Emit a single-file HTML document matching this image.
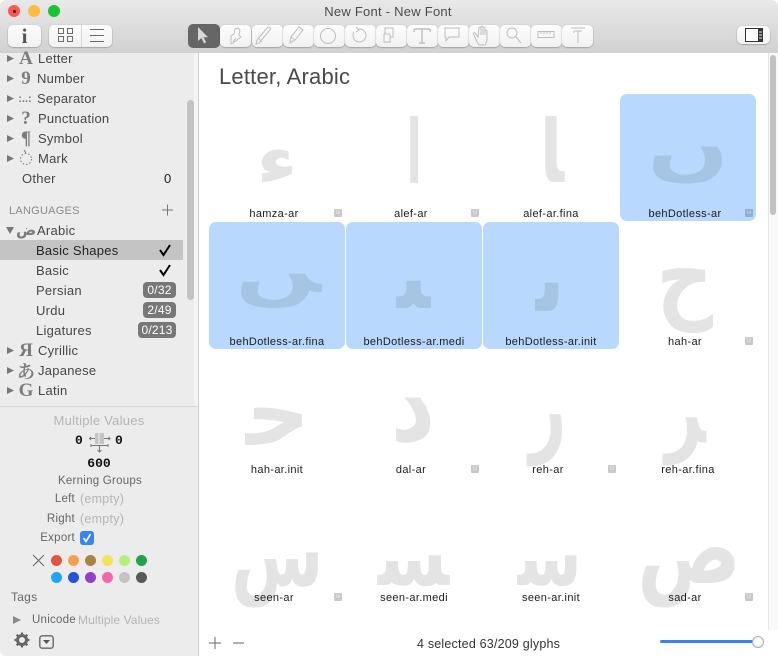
<!DOCTYPE html>
<html><head><meta charset="utf-8"><style>
html,body{margin:0;padding:0;width:778px;height:656px;overflow:hidden;background:#fff;font-family:"Liberation Sans",sans-serif}
#w{position:absolute;left:0;top:0;width:778px;height:656px;background:#fff;border-radius:6px;overflow:hidden}
.a{position:absolute}
.t{position:absolute;white-space:nowrap;line-height:20px;height:20px;font-size:13px;letter-spacing:.25px;color:#464646;margin-top:1px}
.i{position:absolute;white-space:nowrap;font-family:"Liberation Serif",serif;font-weight:bold;color:#7c7c7c;line-height:20px;height:20px;font-size:19px;text-align:center;width:20px;margin-top:1px}
.b{position:absolute;background:#777;color:#fff;border-radius:4px;height:16px;line-height:16px;font-size:12px;text-align:center;letter-spacing:.2px}
.btn{position:absolute;background:linear-gradient(#fdfdfd,#f1f1f1);border-radius:5px;box-shadow:0 .5px 1.5px rgba(0,0,0,.38)}
.cell{position:absolute;width:136px;height:127px;background:#b8d9fd;border-radius:7px}
.l{position:absolute;width:136px;text-align:center;font-size:11px;letter-spacing:.35px;line-height:14px;color:#1c1c1c;white-space:nowrap;margin-top:1px}
.u{position:absolute;width:8px;height:8px;background:#c9c9c9;border-radius:1px;color:#eee;font-size:7px;line-height:8px;text-align:center}
.m{font-family:"Liberation Mono",monospace;color:#111;font-size:13px}
.c{position:absolute;width:11px;height:11px;border-radius:50%}
svg{position:absolute;overflow:visible}
#ar text{font-family:"DejaVu Sans",sans-serif;font-weight:bold;font-size:100px;fill:#e4e4e4}
#ar text.s{fill:#a6c5e5}
</style></head><body><div id="w">

<div class="a" style="left:0;top:0;width:778px;height:53px;background:linear-gradient(#e9e9e9,#d1d1d1)"></div>
<div class="a" style="left:8px;top:5px;width:12px;height:12px;border-radius:50%;background:#fc5753"></div>
<div class="a" style="left:12.5px;top:9.5px;width:3px;height:3px;border-radius:50%;background:#5e0b08"></div>
<div class="a" style="left:28px;top:5px;width:12px;height:12px;border-radius:50%;background:#fdbc40"></div>
<div class="a" style="left:48px;top:5px;width:12px;height:12px;border-radius:50%;background:#19c332"></div>
<div class="t" style="left:288px;width:200px;text-align:center;top:1px;color:#4b4b4b">New Font - New Font</div>

<div class="btn" style="left:8px;top:25px;width:33px;height:22px"></div>
<div class="a" style="left:8px;top:23px;width:33px;text-align:center;font:bold 21px/26px 'Liberation Serif',serif;color:#555">i</div>
<div class="btn" style="left:49px;top:25px;width:63px;height:22px"></div>
<div class="a" style="left:81px;top:25px;width:1px;height:22px;background:#d8d8d8"></div>
<svg style="left:0;top:0" width="778" height="53" fill="none" stroke="#6c6c6c" stroke-width="1">
<rect x="58.5" y="28.5" width="5" height="5"/><rect x="67.5" y="28.5" width="5" height="5"/><rect x="58.5" y="36.5" width="5" height="5"/><rect x="67.5" y="36.5" width="5" height="5"/>
<path d="M90 29.5h14M90 35.5h14M90 41.5h14"/>
</svg>

<div class="a" style="left:188px;top:24px;width:32px;height:24px;background:#666;border-radius:5px"></div>
<div class="btn" style="left:220px;top:25px;width:31px;height:22px"></div>
<div class="btn" style="left:251.5px;top:25px;width:31px;height:22px"></div>
<div class="btn" style="left:283px;top:25px;width:30.5px;height:22px"></div>
<div class="btn" style="left:314px;top:25px;width:30.5px;height:22px"></div>
<div class="btn" style="left:345px;top:25px;width:30.5px;height:22px"></div>
<div class="btn" style="left:376px;top:25px;width:30.5px;height:22px"></div>
<div class="btn" style="left:407px;top:25px;width:30.5px;height:22px"></div>
<div class="btn" style="left:438px;top:25px;width:30.5px;height:22px"></div>
<div class="btn" style="left:469px;top:25px;width:30.5px;height:22px"></div>
<div class="btn" style="left:500px;top:25px;width:30.5px;height:22px"></div>
<div class="btn" style="left:531px;top:25px;width:30.5px;height:22px"></div>
<div class="btn" style="left:562px;top:25px;width:31px;height:22px"></div>
<div class="btn" style="left:737px;top:26px;width:33px;height:18px"></div>
<svg style="left:0;top:0" width="778" height="53" fill="none" stroke="#bdbdbd" stroke-width="1">
<path d="M198 27v14l3.4-3 2.6 5.4 2.2-1-2.6-5.2h4.4z" fill="#d8d8d8" stroke="none"/>
<path d="M231 44V36l3-2 1-5 3-1 2 2-1 5 2 2-8 6zM233 42l3-4"/>
<path d="M256 44l3-1 11-13c2-2-1-4-3-2l-10 12zM259 39l3 3"/>
<path d="M290 43l1-6 8-10 4 3-8 10zM291 37l4 3"/>
<circle cx="328" cy="36" r="7.500"/>
<path d="M356 27l3 3-3 2M359 29a6.500 6.500 0 1 1-5 3"/>
<path d="M384 34h6v8h-6zM390 37h3v-9h-8v6"/>
<path d="M414 29h16M422 29v14M419 43h6M414 29v3M430 29v3" stroke-width="1.400"/>
<path d="M445 28h14v9h-10l-3 4v-4h-1z"/>
<path d="M478 37l-3-4c-1-1-2 0-1 2l3 7 2 3h6l2-4v-10c0-1-2-1-2 0v4-7c0-1-2-1-2 0v7-8c0-1-2-1-2 0v8-7c0-1-2-1-2 0z"/>
<circle cx="512" cy="33" r="5"/><path d="M516 37l5 6"/>
<path d="M538 31.500h16v6h-16zM541 32v2M544 32v2M547 32v2M550 32v2"/>
<path d="M571 28h14M578 31v12M574 31h8M574 31v2"/>
</svg>
<svg style="left:0;top:0" width="778" height="53">
<path d="M745.500 28.500h14v13h-14z" fill="#fff" stroke="#333"/><rect x="758" y="28" width="5" height="14" fill="#333"/>
<path d="M759 32h3M759 35h3M759 38h3" stroke="#eee"/>
</svg>

<div class="a" style="left:0;top:53px;width:198px;height:603px;background:#ececec"></div>
<div class="a" style="left:194px;top:53px;width:4px;height:353px;background:#f5f5f5"></div>
<div class="a" style="left:198px;top:53px;width:1px;height:603px;background:#cfcfcf"></div>
<div class="a" style="left:187px;top:100px;width:7px;height:200px;background:#c2c2c2;border-radius:4px"></div>
<div class="a" style="left:0;top:240px;width:183px;height:20px;background:#c4c4c4"></div>

<svg style="left:0;top:0" width="198" height="400" fill="#787878">
<path d="M7 55v7l7-3.500zM7 75v7l7-3.500zM7 95v7l7-3.500zM7 115v7l7-3.500zM7 135v7l7-3.500zM7 155v7l7-3.500zM7 347v7l7-3.500zM7 367v7l7-3.500zM7 387v7l7-3.500zM6 227h8l-4 7z"/>
<circle cx="26" cy="159" r="5.500" fill="none" stroke="#777" stroke-dasharray="1.500 2"/>
<path d="M24 150l2 3" stroke="#777"/>
</svg>
<div class="i" style="left:16px;top:48px">A</div>
<div class="i" style="left:16px;top:68px">9</div>
<div class="i" style="left:15px;top:88px;font-size:11px;letter-spacing:0;font-family:'Liberation Sans',sans-serif">:..:</div>
<div class="i" style="left:16px;top:108px">?</div>
<div class="i" style="left:16px;top:128px">¶</div>
<div class="i" style="left:16px;top:340px">Я</div>
<div class="i" style="left:16px;top:360px;font-family:'Noto Serif CJK SC',serif;font-size:18px">あ</div>
<div class="i" style="left:16px;top:380px">G</div>
<div class="i" style="left:16px;top:219px;font:bold 15px/20px 'DejaVu Sans',sans-serif">ض</div>

<div class="t" style="left:38px;top:48px">Letter</div>
<div class="t" style="left:37px;top:68px">Number</div>
<div class="t" style="left:37px;top:88px">Separator</div>
<div class="t" style="left:38px;top:108px">Punctuation</div>
<div class="t" style="left:38px;top:128px">Symbol</div>
<div class="t" style="left:38px;top:148px">Mark</div>
<div class="t" style="left:22px;top:168px">Other</div>
<div class="t" style="left:164px;top:168px;color:#222">0</div>
<div class="t" style="left:9px;top:200px;font-size:11px;color:#8a8a8a">LANGUAGES</div>
<svg style="left:160px;top:203px" width="15" height="15"><path d="M7.500 1.500v11M2 7h11" stroke="#777"/></svg>
<div class="t" style="left:37px;top:220px">Arabic</div>
<div class="t" style="left:36px;top:240px;color:#222">Basic Shapes</div>
<div class="t" style="left:36px;top:260px">Basic</div>
<div class="t" style="left:36px;top:280px">Persian</div>
<div class="t" style="left:36px;top:300px">Urdu</div>
<div class="t" style="left:36px;top:320px">Ligatures</div>
<div class="t" style="left:38px;top:340px">Cyrillic</div>
<div class="t" style="left:38px;top:360px">Japanese</div>
<div class="t" style="left:38px;top:380px">Latin</div>
<svg style="left:159px;top:244px" width="14" height="34" fill="none" stroke="#000" stroke-width="2">
<path d="M1 6l3.500 5L11 1"/><path d="M1 26l3.500 5L11 21"/>
</svg>
<div class="b" style="left:143px;top:282px;width:33px">0/32</div>
<div class="b" style="left:143px;top:302px;width:33px">2/49</div>
<div class="b" style="left:138px;top:322px;width:38px">0/213</div>

<div class="a" style="left:0;top:406px;width:198px;height:1px;background:#d6d6d6"></div>
<div class="a" style="left:0;top:407px;width:198px;height:249px;background:#ececec"></div>
<div class="t" style="left:0;width:198px;text-align:center;top:410px;color:#b4b4b4">Multiple Values</div>
<div class="t m" style="left:75px;top:430px;font-weight:bold;letter-spacing:0">0</div>
<div class="t m" style="left:115px;top:430px;font-weight:bold;letter-spacing:0">0</div>
<svg style="left:88px;top:432px" width="24" height="24" fill="none" stroke="#777">
<rect x="7" y="1" width="9" height="11" fill="#c4c4c4" stroke="none"/><path d="M11 1v11" stroke="#eee"/>
<path d="M2 6.500h5M16 6.500h6M3 5l-1.500 1.500L3 8M20.500 5l1.500 1.500L20.500 8M3 12v3M20 12v3M3 13.500h17M11.500 14v6M9.500 18l2 2 2-2"/>
</svg>
<div class="t m" style="left:0;width:198px;text-align:center;top:453px;font-weight:bold;letter-spacing:0">600</div>
<div class="t" style="left:0;width:200px;text-align:center;top:470px;font-size:11.500px;color:#666">Kerning Groups</div>
<div class="t" style="left:0;width:75px;text-align:right;top:488px;font-size:11.500px;color:#666">Left</div>
<div class="t" style="left:80px;top:488px;font-size:12.500px;color:#b4b4b4">(empty)</div>
<div class="t" style="left:0;width:75px;text-align:right;top:508px;font-size:11.500px;color:#666">Right</div>
<div class="t" style="left:80px;top:508px;font-size:12.500px;color:#b4b4b4">(empty)</div>
<div class="t" style="left:0;width:75px;text-align:right;top:527px;font-size:11.500px;color:#666">Export</div>
<div class="a" style="left:80px;top:531px;width:14px;height:14px;background:#3a83f6;border-radius:3px"></div>
<svg style="left:80px;top:531px" width="14" height="14"><path d="M3.500 7l2.500 3.500L10.500 3" fill="none" stroke="#fff" stroke-width="1.600"/></svg>
<svg style="left:32px;top:554px" width="13" height="13"><path d="M1 1l11 11M12 1L1 12" stroke="#666"/></svg>
<div class="c" style="left:50.500px;top:554.500px;background:#e0553f"></div>
<div class="c" style="left:67.500px;top:554.500px;background:#f4a050"></div>
<div class="c" style="left:84.500px;top:554.500px;background:#a98246"></div>
<div class="c" style="left:101.500px;top:554.500px;background:#f3e35a"></div>
<div class="c" style="left:118.500px;top:554.500px;background:#b6ee7c"></div>
<div class="c" style="left:135.500px;top:554.500px;background:#22a24a"></div>
<div class="c" style="left:50.500px;top:571.500px;background:#22a5f5"></div>
<div class="c" style="left:67.500px;top:571.500px;background:#2352dd"></div>
<div class="c" style="left:84.500px;top:571.500px;background:#8f3fc8"></div>
<div class="c" style="left:101.500px;top:571.500px;background:#f567ad"></div>
<div class="c" style="left:118.500px;top:571.500px;background:#c4c4c4"></div>
<div class="c" style="left:135.500px;top:571.500px;background:#585858"></div>
<div class="t" style="left:11px;top:586px;font-size:12px;color:#666">Tags</div>
<svg style="left:13px;top:615px" width="9" height="10"><path d="M0 1v8l8-4z" fill="#8a8a8a"/></svg>
<div class="t" style="left:32px;top:609px;font-size:11.500px;color:#666">Unicode</div>
<div class="t" style="left:78px;top:609px;font-size:12px;color:#b4b4b4;letter-spacing:.1px">Multiple Values</div>
<svg style="left:14px;top:632px" width="16" height="16"><circle cx="8" cy="8" r="4.500" fill="none" stroke="#666" stroke-width="3"/><path d="M8 .5v3M8 12.500v3M.5 8h3M12.500 8h3M2.700 2.700l2 2M11.300 11.300l2 2M13.300 2.700l-2 2M4.700 11.300l-2 2" stroke="#666" stroke-width="2.200"/></svg>
<svg style="left:39px;top:635px" width="16" height="14"><rect x=".8" y=".8" width="13.400" height="12.400" rx="2.500" fill="none" stroke="#666" stroke-width="1.400"/><path d="M4 5h7l-3.500 4z" fill="#555"/></svg>

<div class="a" style="left:768px;top:53px;width:10px;height:577px;background:#f9f9f9;border-left:1px solid #e6e6e6;box-sizing:border-box"></div>
<div class="a" style="left:770px;top:55px;width:6px;height:160px;background:#c2c2c2;border-radius:3px"></div>

<div class="a" style="left:219px;top:63px;font-size:22px;letter-spacing:.2px;line-height:28px;color:#4a4a4a;white-space:nowrap">Letter, Arabic</div>

<div class="cell" style="left:620px;top:94px"></div>
<div class="cell" style="left:209px;top:222px"></div>
<div class="cell" style="left:346px;top:222px"></div>
<div class="cell" style="left:483px;top:222px"></div>

<svg id="ar" style="left:0;top:0" width="778" height="656">
<text transform="translate(261,183) scale(.6)">&#x621;</text>
<text transform="translate(400,183) scale(.9)">&#x627;</text>
<text transform="translate(540,183) scale(.9)">&#xFE8E;</text>
<text class="s" transform="translate(653,183) scale(.8)">&#xFB9E;</text>
<text class="s" transform="translate(241,308) scale(.8)">&#xFB9F;</text>
<text class="s" transform="translate(396,308) scale(.8)">&#xFBE9;</text>
<text class="s" transform="translate(535,308) scale(.8)">&#xFBE8;</text>
<text transform="translate(662,300) scale(1)">&#xFEA1;</text>
<text transform="translate(245,445) scale(1)">&#xFEA3;</text>
<text transform="translate(396,444) scale(1)">&#xFEA9;</text>
<text transform="translate(526,440) scale(1)">&#xFEAD;</text>
<text transform="translate(662,440) scale(1)">&#xFEAE;</text>
<text transform="translate(235,580) scale(1)">&#xFEB1;</text>
<text transform="translate(377,586) scale(1)">&#xFEB4;</text>
<text transform="translate(517,586) scale(1)">&#xFEB3;</text>
<text transform="translate(642,580) scale(1)">&#xFEB9;</text>
</svg>

<div class="l" style="left:206px;top:206px">hamza-ar</div><div class="u" style="left:334px;top:209px">u</div>
<div class="l" style="left:343px;top:206px">alef-ar</div><div class="u" style="left:471px;top:209px">u</div>
<div class="l" style="left:483px;top:206px">alef-ar.fina</div>
<div class="l" style="left:617px;top:206px">behDotless-ar</div><div class="u" style="left:745px;top:209px;background:#8fafd0;color:#cde">u</div>
<div class="l" style="left:209px;top:334px">behDotless-ar.fina</div>
<div class="l" style="left:346px;top:334px">behDotless-ar.medi</div>
<div class="l" style="left:483px;top:334px">behDotless-ar.init</div>
<div class="l" style="left:617px;top:334px">hah-ar</div><div class="u" style="left:745px;top:337px">u</div>
<div class="l" style="left:209px;top:462px">hah-ar.init</div>
<div class="l" style="left:343px;top:462px">dal-ar</div><div class="u" style="left:471px;top:465px">u</div>
<div class="l" style="left:480px;top:462px">reh-ar</div><div class="u" style="left:608px;top:465px">u</div>
<div class="l" style="left:620px;top:462px">reh-ar.fina</div>
<div class="l" style="left:206px;top:590px">seen-ar</div><div class="u" style="left:334px;top:593px">u</div>
<div class="l" style="left:346px;top:590px">seen-ar.medi</div>
<div class="l" style="left:483px;top:590px">seen-ar.init</div>
<div class="l" style="left:617px;top:590px">sad-ar</div><div class="u" style="left:745px;top:593px">u</div>

<div class="a" style="left:199px;top:630px;width:579px;height:26px;background:#fff"></div>
<svg style="left:208px;top:636px" width="40" height="14"><path d="M7 1v12M1 7h12M25 7h11" stroke="#666"/></svg>
<div class="t" style="left:417px;top:633px;font-size:12.500px;color:#333;letter-spacing:.2px">4 selected 63/209 glyphs</div>
<div class="a" style="left:660px;top:640px;width:94px;height:3px;background:#3b82ee;border-radius:2px"></div>
<div class="a" style="left:751.500px;top:636px;width:10px;height:10px;border-radius:50%;background:#fff;border:1px solid #aaa"></div>
</div>
<script>
(function(){
var B=[[261,150,292,183],[410,116,418,183],[545,116,565,182],[653,146,722,183],[241,273,322,308],[396,280,431,308],[535,282,559,311],[662,268,713,333],[245,407,302,445],[396,397,433,444],[526,413,562,466],[662,417,707,466],[235,552,318,608],[377,555,450,586],[517,555,577,586],[642,547,735,608]];
var ctx=document.createElement('canvas').getContext('2d');
ctx.font='bold 100px "DejaVu Sans"';
var T=document.querySelectorAll('#ar text');
for(var i=0;i<T.length;i++){
 var m=ctx.measureText(T[i].textContent);
 var l=-m.actualBoundingBoxLeft,r=m.actualBoundingBoxRight,t=-m.actualBoundingBoxAscent,b=m.actualBoundingBoxDescent;
 if(!(r>l)||!(b>t))continue;
 var sx=(B[i][2]-B[i][0])/(r-l),sy=(B[i][3]-B[i][1])/(b-t);
 T[i].setAttribute('transform','translate('+(B[i][0]-sx*l)+','+(B[i][1]-sy*t)+') scale('+sx+','+sy+')');
}
})();
</script>
</body></html>
